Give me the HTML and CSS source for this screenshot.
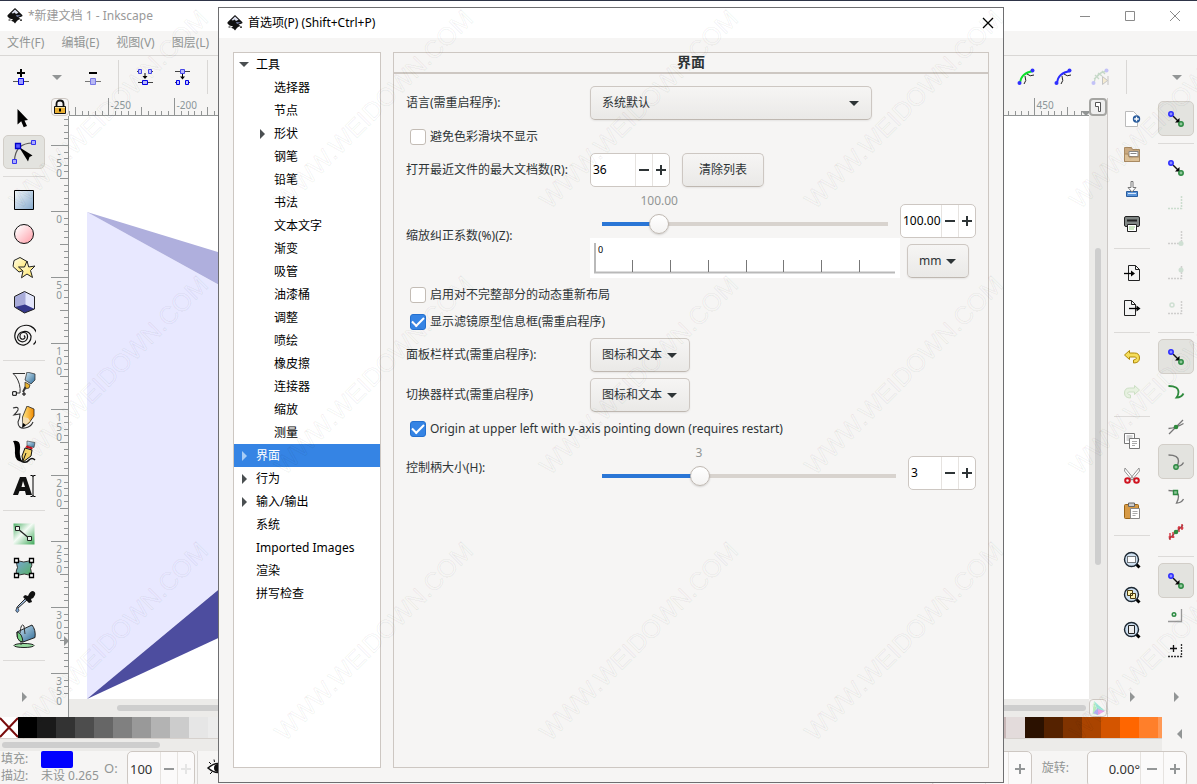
FILE: index.html
```html
<!DOCTYPE html>
<html lang="zh-CN">
<head>
<meta charset="utf-8">
<title>新建文档 1 - Inkscape</title>
<link rel="stylesheet" href="styles.css">
</head>
<body>
<svg class="defs" aria-hidden="true">
  <defs>
    <linearGradient id="gBlue" x1="0" y1="0" x2="1" y2="1"><stop offset="0" stop-color="#f4f8fb"/><stop offset="1" stop-color="#85a9cc"/></linearGradient>
    <linearGradient id="gPink" x1="0" y1="0" x2="1" y2="1"><stop offset=".1" stop-color="#fff"/><stop offset="1" stop-color="#ff9aa5"/></linearGradient>
    <linearGradient id="gYellow" x1="0" y1="0" x2="1" y2="1"><stop offset="0" stop-color="#fffef0"/><stop offset="1" stop-color="#ffe45c"/></linearGradient>
    <linearGradient id="gGreen" x1="0" y1="0" x2="1" y2="1"><stop offset="0" stop-color="#4fb068"/><stop offset=".45" stop-color="#f4fbf5"/><stop offset="1" stop-color="#3ea858"/></linearGradient>
    <linearGradient id="gMesh" x1="0" y1="0" x2="1" y2="1"><stop offset="0" stop-color="#7aa6d6"/><stop offset="1" stop-color="#55b060"/></linearGradient>
    <linearGradient id="gSteel" x1="0" y1="0" x2="1" y2="1"><stop offset="0" stop-color="#d5ecf8"/><stop offset="1" stop-color="#2e6a96"/></linearGradient>
    <linearGradient id="gOrange" x1="0" y1="0" x2="1" y2="0"><stop offset="0" stop-color="#ffe98a"/><stop offset="1" stop-color="#f08a00"/></linearGradient>
    <symbol id="logo" viewBox="0 0 16 16"><path d="M8 0 15.500 7.200Q16 8.500 13.500 9L11.500 9.500 13.500 11 11 12 9.500 13.500 8 15.500 6.500 13.800 4 12.800 6.200 11.500 2.500 10.500 0.500 8.500 0.500 7.200Z" fill="#111"/><path d="M8 1.500 4.500 5 6 5.500 7.500 4.500 9 6 11.500 4.800Z" fill="#dfe3f2"/><path d="M9 7 14 7.500 10 9Z" fill="#7c86ac"/><path d="M13 11.500h2v1.200h-2zM1.500 11.500h2v1h-2z" fill="#111"/></symbol>
    <symbol id="snap" viewBox="0 0 24 24"><path d="m9 9 6 6" stroke="#111" stroke-width="1.400"/><path d="M15.500 15.500h-4.500L15.500 11Z" fill="#000"/><circle cx="7" cy="7" r="2.200" fill="#8f8fff" stroke="#2b2bff" stroke-width="1.500"/><circle cx="17" cy="17" r="2.200" fill="#8fc79a" stroke="#2d8a42" stroke-width="1.500"/></symbol>
    <symbol id="lens" viewBox="0 0 24 24"><path d="m16 16 3.500 3.500" stroke="#000" stroke-width="3"/><circle cx="11.500" cy="11.500" r="7" fill="#cfe0f0" stroke="#1c2732" stroke-width="1.400"/></symbol>
  </defs>
</svg>

<div class="app">
  <header class="titlebar">
    <svg class="logo"><use href="#logo"/></svg>
    <span>*新建文档 1 - Inkscape</span>
    <div class="window-buttons">
      <button aria-label="最小化"><svg viewBox="0 0 12 12"><path d="M1 6.500h10"/></svg></button>
      <button aria-label="最大化"><svg viewBox="0 0 12 12"><path d="M1.500 1.500h9v9h-9z"/></svg></button>
      <button aria-label="关闭"><svg viewBox="0 0 12 12"><path d="m1 1 10 10M11 1 1 11"/></svg></button>
    </div>
  </header>

  <nav class="menubar">
    <button>文件(F)</button><button>编辑(E)</button><button>视图(V)</button><button>图层(L)</button>
  </nav>

  <div class="toolbar">
    <button class="tb" aria-label="插入节点"><svg viewBox="0 0 24 24"><path d="M4 16.500h16" stroke="#555"/><path d="M12 4v8M8 8h8" stroke="#000" stroke-width="2"/><path d="M9.500 13.500h5v6h-5z" fill="#9d9dff" stroke="#0000e6"/></svg></button>
    <button class="tb-caret" aria-label="更多插入选项"><span class="caret"></span></button>
    <button class="tb" aria-label="删除节点"><svg viewBox="0 0 24 24"><path d="M4 16.500h16" stroke="#777"/><path d="M8 8h8" stroke="#000" stroke-width="2"/><path d="M9.500 13.500h5v6h-5z" fill="#b8b8f4" stroke="#7a7ae6"/></svg></button>
    <span class="vsep"></span>
    <button class="tb" aria-label="连接节点"><svg viewBox="0 0 24 24"><path d="M5 17.500h15" stroke="#444"/><path d="M9.500 15.500h5v4h-5z" fill="#b8b8ff" stroke="#0000e6"/><path d="M5.500 4.500h3v4h-3zM15.500 4.500h3v4h-3z" fill="#c4c4ff" stroke="#4646e8"/><path d="M4 6.500h1M19 6.500h1" stroke="#444"/><path d="M12 8v4" stroke="#000"/><path d="M9.500 11h5L12 14Z"/></svg></button>
    <button class="tb" aria-label="分割节点"><svg viewBox="0 0 24 24"><path d="M5 6.500h15" stroke="#444"/><path d="M10.500 4.500h4v4h-4z" fill="#b8b8ff" stroke="#4646e8"/><path d="M6.500 15.500h3v4h-3zM15.500 15.500h3v4h-3z" fill="#c4c4ff" stroke="#0000e6"/><path d="M5 17.500h1M19 17.500h1" stroke="#444"/><path d="M12.500 9v3" stroke="#000"/><path d="M10 11.500h5L12.500 14.500Z"/></svg></button>
    <span class="vsep"></span>
    <div class="toolbar-end">
      <button class="tb" aria-label="蒙版路径"><svg viewBox="0 0 24 24"><path d="M5 18Q6 8 18 6" fill="none" stroke="#0be02a" stroke-width="1.800"/><path d="M10 11q2 5-1 8M12 9q3 3 7 1" fill="none" stroke="#222"/><circle cx="4.500" cy="18" r="2" fill="#3030ff"/><circle cx="17.500" cy="5.500" r="2" fill="#3030ff"/></svg></button>
      <button class="tb" aria-label="编辑剪裁路径"><svg viewBox="0 0 24 24"><path d="M5 18Q6 8 18 6" fill="none" stroke="#2a2aff" stroke-width="1.800"/><path d="M10 11q2 5-1 8M12 9q3 3 7 1" fill="none" stroke="#222"/><circle cx="4.500" cy="18" r="2" fill="#3030ff"/><circle cx="17.500" cy="5.500" r="2" fill="#3030ff"/></svg></button>
      <button class="tb faded" aria-label="路径效果参数" disabled><svg viewBox="0 0 24 24"><path d="M5 18Q6 8 18 6M5 14l5-4M9 8l4 3m0-5 3 3M6 10l4 4" fill="none" stroke="#5a9a65" stroke-width="1.300"/><circle cx="4.500" cy="18" r="2" fill="#5050ff"/><circle cx="17.500" cy="5.500" r="2" fill="#5050ff"/><path d="m13.500 11.500 5 4-5 4zM19 11v9" fill="#f5d680" stroke="#555"/></svg></button>
      <span class="vsep"></span>
      <button class="tb-caret far" aria-label="更多"><span class="caret"></span></button>
    </div>
  </div>

  <main class="workspace">
    <div class="toolbox">
      <button aria-label="选择器"><svg viewBox="0 0 24 24"><path d="M5.500 3v15.500l3.700-3.200 2.500 6 3.300-1.400-2.500-5.400 3.500-.5Z"/></svg></button>
      <button class="on" aria-label="节点"><svg viewBox="0 0 24 24"><path d="M2.500 21Q3 3 21 3" fill="none" stroke="#555" stroke-width="1.200"/><path d="m7 7 13.500 8.500-3 1.500-1.500 4.500Z" fill="#000"/><path d="M3.500 3.500h5v5h-5z" fill="#5a5aff" stroke="#0000c8" stroke-width="1.300"/><path d="M19.500.5h4v4h-4zM.5 19.500h4v4h-4z" fill="#aaf" stroke="#33e" /></svg></button>
      <hr>
      <button aria-label="矩形"><svg viewBox="0 0 24 24"><path d="M2.500 2.500h19v19h-19z" fill="url(#gBlue)" stroke="#000"/></svg></button>
      <button aria-label="椭圆"><svg viewBox="0 0 24 24"><circle cx="12" cy="12" r="9.500" fill="url(#gPink)" stroke="#111"/></svg></button>
      <button aria-label="星形"><svg viewBox="0 0 24 24"><path d="m8 1.500 7 4-1 8-7 2.500-6-5.500 1-6Z" fill="url(#gYellow)" stroke="#222"/><path d="m15 5 1.700 6 6.300-1-4.500 4.500 2 7-5.500-3.500-5.500 3.800L11 15 6.500 11h6Z" fill="url(#gYellow)" stroke="#222"/></svg></button>
      <button aria-label="3D 盒子"><svg viewBox="0 0 24 24"><path d="M2.500 6.500 12.500 1.500 22.500 6.500V19L12.500 23 2.500 17Z" fill="#a9acd9"/><path d="M13.500 1.500 22.500 6.500V19l-9-4Z" fill="#e3e6fb"/><path d="m3 17 10-2.500 9.500 4.500-10 4Z" fill="#35388b"/><path d="M2.500 6.500 12.500 1.500 22.500 6.500V19L12.500 23 2.500 17Z" fill="none" stroke="#222"/></svg></button>
      <button aria-label="螺旋"><svg viewBox="0 0 24 24"><path d="M12 11.500q2 2 0 3.300a2.600 2.600 0 0 1-4-2.300 3.700 3.700 0 0 1 7.500-.5 5 5 0 0 1-10 1.500 7 7 0 0 1 13.500-1.500 8 8.500 0 0 1-15.500 3.500A11 10.500 0 0 1 12 1.500a11 11 0 0 1 9.500 19" fill="none" stroke="#111" stroke-width="1.200"/></svg></button>
      <hr>
      <button aria-label="钢笔"><svg viewBox="0 0 24 24"><path d="M1 1.500h12M1 1.500l2.500 2.500Q9 12 8 21H3" fill="none" stroke="#333"/><path d="m15 0 8 2v6l-4 4-6-4Z" fill="url(#gSteel)" stroke="#222" stroke-width=".7"/><path d="m13 10 5 3-1 3-4 1Z" fill="#e8b12e" stroke="#222" stroke-width=".7"/><path d="m13.500 15-2.500 5" stroke="#333" stroke-width="2"/><path d="M.7 19.700h3.600v3.600H.7zM11 21h2v2h-2z" fill="#fff" stroke="#000"/></svg></button>
      <button aria-label="铅笔"><svg viewBox="0 0 24 24"><path d="M1 2q6-2 5 2-1 2-4 5l6-1Q8 12 6 16q0 7 7 6 6-1 8-6" fill="none" stroke="#333" stroke-width="1.100"/><path d="m15 0 7 3v7l-5 7-6 4-.500-10Z" fill="url(#gOrange)" stroke="#222" stroke-width=".8"/><path d="m11 11 5 1 2 3-7 6Z" fill="#f3ddb2"/><path d="m11 17-1 5 4-3Z"/></svg></button>
      <button aria-label="书法"><svg viewBox="0 0 24 24"><path d="M1 1q8-2 7 8-1 9 3 13Q2 22 3 11q0-7-2-10Z"/><path d="M9 21q5 3 8-1 3-3 6 0" fill="none" stroke="#111" stroke-width="1.500"/><path d="m15 1 8 1.500-1 5-7-2Z" fill="url(#gSteel)" stroke="#333" stroke-width=".6"/><path d="m14.500 5.500 6 2v2l-7-2Z" fill="#c40f1c"/><path d="m13 8 7 2-1 6-8 6-1-6Z" fill="#f5d469" stroke="#111"/><path d="m11 21 3-8" stroke="#111"/></svg></button>
      <button aria-label="文本"><svg viewBox="0 0 24 24"><path d="m1 21 7-18h6l6 18M13 21" fill="#111"/><path d="m9.500 13 1.500-6 2 6Z" fill="#f6f5f4"/><path d="m7.500 17h5.500l1 4h-8Z" fill="#f6f5f4"/><path d="M18.500 1.500h1.500q1 0 1 1 0-1 1-1h1.500M18.500 22.500h1.500q1 0 1-1 0 1 1 1h1.500M21 2v20" fill="none" stroke="#000"/></svg></button>
      <hr>
      <button aria-label="渐变"><svg viewBox="0 0 24 24"><path d="M1.500 1.500h21v21h-21z" fill="url(#gGreen)"/><path d="m6 7 12 10" stroke="#222" stroke-width="1.300"/><path d="M3.500 4.500h4v4h-4zM15.500 14.500h4v4h-4z" fill="#e8f3ea" stroke="#222"/></svg></button>
      <button aria-label="网格渐变"><svg viewBox="0 0 24 24"><path d="M4.500 4.500q7 3 15 0 1 6-1 8 1 3 1 7-7-3-15 0-1-5 1-8-1-3-1-7Z" fill="url(#gMesh)" stroke="#333"/><path d="M2.500 2.500h4v4h-4zM17.500 2.500h4v4h-4zM2.500 17.500h4v4h-4zM17.500 17.500h4v4h-4z" fill="#fff" stroke="#000" stroke-width="1.300"/></svg></button>
      <button aria-label="吸管"><svg viewBox="0 0 24 24"><path d="m15 7-9 9q-2 2-1 3l11-10Z" fill="#aac8ea" stroke="#222"/><path d="m13 5 3 1q2-5 5-5 3 1 2 4-1 3-4 4l1 3-3 1-6-6Z" fill="#111"/><path d="M5.500 17.500q3 3 0 5-3-1-1-4Z" fill="#7ba8dc" stroke="#333" stroke-width=".8"/></svg></button>
      <button aria-label="油漆桶"><svg viewBox="0 0 24 24"><ellipse cx="12" cy="21.500" rx="10" ry="2" fill="#98dba0" stroke="#222"/><path d="M5 8q-1 5 3 9l3 1 12-4.500Q24 6 20 1Z" fill="url(#gSteel)" stroke="#222"/><path d="M5 8q5 1 6 10-4 0-5.500-4Z" fill="#71cf80" stroke="#222"/><path d="M9 18v3M8 9Q9-2 12 2l1 8" fill="none" stroke="#333"/></svg></button>
      <hr>
      <button class="more" aria-label="更多工具"><span class="tri-right"></span></button>
    </div>

    <div class="canvas-frame">
      <button class="lock" aria-label="锁定参考线"><svg viewBox="0 0 18 18"><path d="M5.500 9V6q0-3.500 3.500-3.500T12.500 6v3" fill="none" stroke="#111" stroke-width="1.800"/><path d="M3.500 8.500h11v7h-11z" fill="#e9af32" stroke="#111"/><path d="M4 9.500h10" stroke="#fbe59c"/><path d="M8 10.500h2v3h-2z"/></svg></button>
      <svg class="ruler-h" id="rulerH" aria-hidden="true"></svg>
      <button class="page-btn" aria-label="缩放到页面"><svg viewBox="0 0 18 18"><path d="M6.500 4.500h5v9h-2v-5h-3z" fill="#fff" stroke="#555"/></svg></button>
      <svg class="ruler-v" id="rulerV" aria-hidden="true"></svg>
      <svg class="canvas" role="img" aria-label="画布">
        <path d="M18 96 369 290 18 583Z" fill="#e8e8ff"/>
        <path d="M18 96 440 225V329Z" fill="#afafdd"/>
        <path d="M18 583 440 232V387Z" fill="#4d4d9f"/>
      </svg>
      <div class="scroll-v"><span></span></div>
      <div class="scroll-h"><span></span></div>
      <button class="cms-btn" aria-label="色彩管理"><svg viewBox="0 0 18 18"><path d="M5 2 3.500 15 9 16Z" fill="#b9f0c0"/><path d="M5 2 16 12 9 13Z" fill="#9fe9d8"/><path d="m16 12-7 4-.500-6Z" fill="#e8a5e8"/><path d="m4 14 5 2V9Z" fill="#b5b0f5"/></svg></button>
    </div>

    <div class="dock commands">
      <button aria-label="新建"><svg viewBox="0 0 24 24"><path d="M5.500 4.500h8l4 4v11h-12z" fill="#fff" stroke="#bbb"/><circle cx="16.500" cy="12" r="3.700" fill="#2a5c9c"/><path d="M16.500 9.700v4.600M14.200 12h4.600" stroke="#fff" stroke-width="1.300"/></svg></button>
      <button aria-label="打开"><svg viewBox="0 0 24 24"><path d="M4.500 5.500h7l1 2h7v12h-15z" fill="#c9a980" stroke="#a98a62"/><path d="M9 9.500h9v5H9z" fill="#fff" stroke="#888"/><path d="M10.500 11.500h6" stroke="#888"/><path d="M4.500 12h3.500l1 3h10.500v4.500h-15z" fill="#dcc096" stroke="#a98a62"/></svg></button>
      <button aria-label="保存"><svg viewBox="0 0 24 24"><path d="M6.500 14.500h11v5h-11z" fill="#5b95da" stroke="#2a5c9c"/><path d="M8 16.500h8" stroke="#dce9f8"/><path d="M11 4.500h2v6h3L12 15l-4-4.500h3z" fill="#fff" stroke="#777"/></svg></button>
      <button aria-label="打印"><svg viewBox="0 0 24 24"><rect x="4.500" y="4.500" width="15" height="10" rx="1.500" fill="#7f8583" stroke="#222"/><path d="M7 7.500h10v2H7z" fill="#222"/><path d="M7.500 12.500h9v7h-9z" fill="#fff" stroke="#222"/><path d="M9 15h6M9 17h5" stroke="#9ccf8a"/></svg></button>
      <hr>
      <button aria-label="导入"><svg viewBox="0 0 24 24"><path d="M8.500 4.500h7l4 4v11h-11z" fill="#f4f4f4" stroke="#222"/><path d="M15.500 4.500v4h4" fill="none" stroke="#222"/><path d="M4 12.500h8" stroke="#000" stroke-width="1.300"/><path d="m11 9.500 4 3-4 3Z"/></svg></button>
      <button aria-label="导出"><svg viewBox="0 0 24 24"><path d="M4.500 4.500h7l4 4v11h-11z" fill="#f4f4f4" stroke="#222"/><path d="M11.500 4.500v4h4" fill="none" stroke="#222"/><path d="M9 12.500h9" stroke="#000" stroke-width="1.300"/><path d="m16.500 9.500 4 3-4 3Z"/></svg></button>
      <hr>
      <button aria-label="撤销"><svg viewBox="0 0 24 24"><path d="M9.500 5.500 4.500 10 9.500 14.500V12h6q2.500 2-2 3v3q6 0 6-5t-5-5H9.500Z" fill="#f5dd5a" stroke="#b08a0a"/></svg></button>
      <button class="faded" aria-label="重做" disabled><svg viewBox="0 0 24 24"><path d="m14.500 5.500 5 4.500-5 4.500V12h-6q-2.500 2 2 3v3q-6 0-6-5t5-5h5Z" fill="#c5e8b5" stroke="#6fae58"/></svg></button>
      <hr>
      <button aria-label="复制"><svg viewBox="0 0 24 24"><path d="M4.500 4.500h10v10h-10z" fill="#fff" stroke="#777"/><path d="M6.500 7h6M6.500 9h6M6.500 11h3" stroke="#aaa"/><path d="M9.500 9.500h10v10h-10z" fill="#fff" stroke="#777"/><path d="M12 12.500h5M12 14.500h5M12 16.500h3" stroke="#aaa"/></svg></button>
      <button aria-label="剪切"><svg viewBox="0 0 24 24"><path d="m5 4 9 11-2 1L4.500 7ZM19 4l-9 11 2 1 7.500-9Z" fill="#fff" stroke="#888" stroke-width=".9"/><circle cx="7.500" cy="16.500" r="2.300" fill="none" stroke="#cf1420" stroke-width="2"/><circle cx="16.500" cy="16.500" r="2.300" fill="none" stroke="#cf1420" stroke-width="2"/></svg></button>
      <button aria-label="粘贴"><svg viewBox="0 0 24 24"><rect x="4.500" y="5.500" width="14" height="14" rx="1" fill="#d79a45" stroke="#9a6416"/><path d="M8.500 4h6v3.500h-6z" fill="#ccc" stroke="#666"/><path d="M10.500 9.500h9v10h-9z" fill="#fff" stroke="#888"/><path d="M12.500 12.500h5M12.500 14.500h5M12.500 16.500h3" stroke="#aaa"/></svg></button>
      <hr>
      <button aria-label="缩放选区"><svg viewBox="0 0 24 24"><use href="#lens"/><path d="M7.500 8.500h8v6h-8z" fill="#fff" stroke="#000" stroke-dasharray="1 1"/></svg></button>
      <button aria-label="缩放绘图"><svg viewBox="0 0 24 24"><use href="#lens"/><path d="M7.500 7.500h5v5h-5zM10.500 10.500h5v5h-5z" fill="#fff3b0" stroke="#4a3a10"/></svg></button>
      <button aria-label="缩放页面"><svg viewBox="0 0 24 24"><use href="#lens"/><path d="M8.500 7.500h6v8h-6z" fill="#eee" stroke="#222"/></svg></button>
      <button class="more" aria-label="更多命令"><span class="tri-right"></span></button>
    </div>

    <div class="dock snaps">
      <button class="on" aria-label="启用吸附"><svg><use href="#snap"/></svg></button>
      <hr>
      <button aria-label="吸附边界框"><svg><use href="#snap"/></svg></button>
      <button class="faded" aria-label="吸附边界框边" disabled><svg viewBox="0 0 24 24"><path d="M4 17.500h13.500V5" fill="none" stroke="#6aa878" stroke-width="1.500" stroke-dasharray="2 1"/></svg></button>
      <button class="faded" aria-label="吸附边界框角" disabled><svg viewBox="0 0 24 24"><path d="M4 17.500h13.500V5" fill="none" stroke="#777" stroke-width="1.500" stroke-dasharray="2 1"/><circle cx="17" cy="17.500" r="2.500" fill="#78b088"/></svg></button>
      <button class="faded" aria-label="吸附边中点" disabled><svg viewBox="0 0 24 24"><path d="M4 17.500h13.500V5" fill="none" stroke="#777" stroke-width="1.500" stroke-dasharray="2 1"/><circle cx="17" cy="9" r="2.500" fill="#78b088"/></svg></button>
      <button class="faded" aria-label="吸附框中心" disabled><svg viewBox="0 0 24 24"><path d="M4 17.500h13.500V5" fill="none" stroke="#777" stroke-width="1.500" stroke-dasharray="2 1"/><circle cx="8" cy="9" r="2" fill="none" stroke="#78b088" stroke-width="1.500"/></svg></button>
      <hr>
      <button class="on" aria-label="吸附节点"><svg><use href="#snap"/></svg></button>
      <button aria-label="吸附路径"><svg viewBox="0 0 24 24"><path d="M4.500 6q10 0 10 6 0 3-2 5.500 5 0 7-4" fill="none" stroke="#2f8a3d" stroke-width="1.800"/></svg></button>
      <button aria-label="吸附交点"><svg viewBox="0 0 24 24"><path d="m5 19 14-14M4.500 13.500Q12 13 19.500 8.500" fill="none" stroke="#777" stroke-width="1.300"/><circle cx="12" cy="12" r="2.300" fill="#2f8a3d"/></svg></button>
      <button class="on" aria-label="吸附尖锐节点"><svg viewBox="0 0 24 24"><path d="M4.500 5q10 0 10 6 0 3-2 5.500 5 0 7-4" fill="none" stroke="#777" stroke-width="1.400"/><circle cx="12" cy="17" r="2.200" fill="#8fc79a" stroke="#2d8a42" stroke-width="1.400"/></svg></button>
      <button aria-label="吸附平滑节点"><svg viewBox="0 0 24 24"><path d="M4.500 5.500q10 0 10 6 0 3-2 6.500 5 0 7-4" fill="none" stroke="#777" stroke-width="1.300"/><path d="M9.500 5.500h4v4h-4z" fill="#8fc79a" stroke="#2d8a42" stroke-width="1.400"/></svg></button>
      <button aria-label="吸附中点"><svg viewBox="0 0 24 24"><path d="m5 19 14-14" stroke="#777" stroke-width="1.300"/><path d="M6 13v7M9 12v6M4.500 17h6M15 6v6M18 4v6M13.500 8h6" stroke="#cf1420" stroke-width="1.200"/><circle cx="12" cy="12" r="2.300" fill="#2f8a3d"/></svg></button>
      <hr>
      <button class="on" aria-label="吸附其它"><svg><use href="#snap"/></svg></button>
      <button aria-label="吸附对象中心"><svg viewBox="0 0 24 24"><path d="M4 17.500h13.500V5" fill="none" stroke="#999" stroke-width="1.300"/><circle cx="10" cy="10.500" r="1.800" fill="#d8ecdc" stroke="#2d8a42" stroke-width="1.400"/></svg></button>
      <button aria-label="吸附旋转中心"><svg viewBox="0 0 24 24"><path d="M4 17.500h13.500V5" fill="none" stroke="#333" stroke-width="1.300" stroke-dasharray="2 1"/><path d="M9.500 6v7M6 9.500h7" stroke="#111" stroke-width="1.300"/></svg></button>
      <button class="more" aria-label="更多吸附选项"><span class="tri-right"></span></button>
    </div>
  </main>

  <div class="palette-bar">
    <div class="palette-main">
      <div class="palette" id="palette"></div>
      <div class="palette-scroll"><span></span></div>
    </div>
    <button class="palette-menu" aria-label="调色板菜单"><span class="tri-left"></span></button>
  </div>

  <footer class="statusbar">
    <div class="style-grid">
      <span>填充:</span><button class="fill-swatch" aria-label="填充颜色"></button>
      <span>描边:</span><span class="stroke-val">未设 0.265</span>
    </div>
    <label class="opacity-label" for="opacity">O:</label>
    <div class="spin dim spin-opacity"><input id="opacity" type="text" value="100"><button class="minus" aria-label="减少"></button><button class="plus pale" aria-label="增加"></button></div>
    <span class="vsep"></span>
    <button class="eye" aria-label="图层可见性"><svg viewBox="0 0 24 24"><path d="M2 12q10-9 20 0-10 9-20 0Z" fill="#fff" stroke="#111" stroke-width="1.500"/><circle cx="12" cy="12" r="4" fill="#111"/><path d="M5 8 3 6M8.500 6 8 3.500M13 5.500V3M17 7l1.500-2.500M6 16l-2 2" stroke="#111"/></svg></button>
    <div class="status-end">
      <div class="spin dim spin-zoom"><input type="text" aria-label="缩放" value="49%"><button class="minus" aria-label="缩小"></button><button class="plus" aria-label="放大"></button></div>
      <label for="rotate">旋转:</label>
      <div class="spin dim spin-rotate"><input id="rotate" type="text" value="0.00°"><button class="minus" aria-label="减少"></button><button class="plus" aria-label="增加"></button></div>
    </div>
  </footer>
</div>

<section class="dialog" role="dialog" aria-labelledby="dlgTitle">
  <header class="dialog-title">
    <svg class="logo"><use href="#logo"/></svg>
    <h1 id="dlgTitle">首选项(P) (Shift+Ctrl+P)</h1>
    <button aria-label="关闭"><svg viewBox="0 0 12 12"><path d="m1 1 10 10M11 1 1 11"/></svg></button>
  </header>
  <div class="dialog-body">
    <ul class="tree" role="tree">
      <li class="open">工具
      <li class="child">选择器
      <li class="child">节点
      <li class="child closed">形状
      <li class="child">钢笔
      <li class="child">铅笔
      <li class="child">书法
      <li class="child">文本文字
      <li class="child">渐变
      <li class="child">吸管
      <li class="child">油漆桶
      <li class="child">调整
      <li class="child">喷绘
      <li class="child">橡皮擦
      <li class="child">连接器
      <li class="child">缩放
      <li class="child">测量
      <li class="closed selected">界面
      <li class="closed">行为
      <li class="closed">输入/输出
      <li>系统
      <li>Imported Images
      <li>渲染
      <li>拼写检查
    </ul>
    <div class="panel">
      <h2>界面</h2>
      <form class="form">
        <div class="row">
          <label for="lang">语言(需重启程序):</label>
          <span class="combo combo-wide"><select id="lang"><option>系统默认</option></select></span>
        </div>
        <label class="check"><input type="checkbox">避免色彩滑块不显示</label>
        <div class="row">
          <label for="recent">打开最近文件的最大文档数(R):</label>
          <div class="spin spin-recent"><input id="recent" type="text" value="36"><button type="button" class="minus" aria-label="减少"></button><button type="button" class="plus" aria-label="增加"></button></div>
          <button type="button" class="btn">清除列表</button>
        </div>
        <div class="row">
          <label for="zoomCorr">缩放纠正系数(%)(Z):</label>
          <div class="zoom-grid">
            <div class="slider">
              <output for="zoomCorr" style="width:40%">100.00</output>
              <input id="zoomCorr" type="range" min="30" max="425" value="100" style="--fill:20%">
            </div>
            <div class="spin"><input type="text" aria-label="缩放纠正值" value="100.00"><button type="button" class="minus" aria-label="减少"></button><button type="button" class="plus" aria-label="增加"></button></div>
            <svg class="zoom-ruler" viewBox="0 0 310 40"><path d="M5 5v30M4 34.500h301" stroke="#b9b9b9" stroke-width="2"/><path d="M42.500 22v12M80.500 22v12M118.500 22v12M156.500 22v12M193.500 22v12M231.500 22v12M269.500 22v12" stroke="#777"/><text x="8" y="15">0</text></svg>
            <span class="combo combo-unit"><select aria-label="单位"><option>mm</option></select></span>
          </div>
        </div>
        <label class="check"><input type="checkbox">启用对不完整部分的动态重新布局</label>
        <label class="check"><input type="checkbox" checked>显示滤镜原型信息框(需重启程序)</label>
        <div class="row">
          <label for="dockStyle">面板栏样式(需重启程序):</label>
          <span class="combo"><select id="dockStyle"><option>图标和文本</option></select></span>
        </div>
        <div class="row">
          <label for="switchStyle">切换器样式(需重启程序)</label>
          <span class="combo"><select id="switchStyle"><option>图标和文本</option></select></span>
        </div>
        <label class="check"><input type="checkbox" checked>Origin at upper left with y-axis pointing down (requires restart)</label>
        <div class="row">
          <label for="handle">控制柄大小(H):</label>
          <div class="handle-grid">
            <div class="slider">
              <output for="handle" style="width:66%">3</output>
              <input id="handle" type="range" min="1" max="7.2" step="any" value="3" style="--fill:33%">
            </div>
            <div class="spin"><input type="text" aria-label="控制柄大小值" value="3"><button type="button" class="minus" aria-label="减少"></button><button type="button" class="plus" aria-label="增加"></button></div>
          </div>
        </div>
      </form>
    </div>
  </div>
</section>

<svg class="watermark" id="watermark" aria-hidden="true"></svg>
<script src="app.js"></script>
</body>
</html>
```

FILE: styles.css
```css
* { box-sizing: border-box; }
html, body { height: 100%; margin: 0; }
body {
  position: relative;
  overflow: hidden;
  background: #f6f5f4;
  color: #2e3436;
  font: 12px/16px "Noto Sans", "Noto Sans CJK SC", sans-serif;
}
button, input, select { font: inherit; color: inherit; margin: 0; }
button { display: flex; align-items: center; justify-content: center; padding: 0; border: 0; background: none; }
hr { width: 100%; height: 1px; margin: 7px 0 6px; border: 0; background: #dcdad8; }
svg { display: block; }
.defs { position: absolute; width: 0; height: 0; }
.logo { width: 16px; height: 16px; }
.faded { opacity: .3; }
.vsep { width: 1px; height: 34px; background: #d9d7d5; }

.caret { border: 5px solid transparent; border-top-color: #929595; border-bottom: 0; }
.tri-right { border: 5px solid transparent; border-left-color: #929595; border-right: 0; }
.tri-left { border: 5px solid transparent; border-right-color: #929595; border-left: 0; }

/* main window */
.app { display: flex; flex-direction: column; height: 100%; color: #929595; }

.titlebar {
  display: flex; align-items: center; gap: 5px; flex: none;
  height: 31px; padding-left: 7px;
  border-top: 1px solid #2e3447; background: #fff; color: #999;
}
.window-buttons { display: flex; margin-left: auto; }
.window-buttons button { width: 45px; height: 30px; }
.window-buttons svg, .dialog-title button svg { width: 12px; height: 12px; fill: none; stroke: #8a8a8a; }

.menubar { display: flex; flex: none; gap: 17px; height: 25px; padding-left: 7px; border-bottom: 1px solid #d9d7d5; }

.toolbar { display: flex; align-items: center; flex: none; height: 42px; padding-left: 2px; }
.toolbar-end { display: flex; align-items: center; margin-left: auto; }
.tb { width: 37px; height: 34px; }
.tb svg { width: 24px; height: 24px; }
.tb-caret { width: 35px; height: 34px; }
.tb-caret.far { width: 20px; margin-left: 33px; margin-right: 10px; }
.toolbar .vsep { margin: 0 7px; }

.workspace { display: flex; flex: 1; min-height: 0; }

.toolbox { display: flex; flex-direction: column; flex: none; width: 51px; padding: 3px 6px 0 3px; }
.toolbox button { flex: none; height: 34px; border: 1px solid transparent; border-radius: 5px; }
.toolbox svg, .dock svg { width: 24px; height: 24px; }
.toolbox .on, .dock .on { background: #e3e3df; border-color: #d2cec8; }
.toolbox .more, .dock .more { height: 20px; margin-top: auto; margin-bottom: 10px; }

.canvas-frame {
  display: grid; flex: 1; min-width: 0;
  grid-template-columns: 18px 1fr 18px;
  grid-template-rows: 18px 1fr 18px;
  grid-template-areas: "lock top page" "left canvas right" "left bottom cms";
}
.lock { grid-area: lock; }
.page-btn { grid-area: page; }
.cms-btn { grid-area: cms; }
.lock, .page-btn, .cms-btn { border: 1px solid #cdc7c2; border-radius: 4px; }
.page-btn { border: 2px solid #a5a5a2; background: #eee; }
.lock svg, .page-btn svg, .cms-btn svg { flex: none; width: 18px; height: 18px; }
.ruler-h { grid-area: top; width: 100%; height: 18px; border-bottom: 1px solid #929595; }
.ruler-v { grid-area: left; width: 18px; height: 100%; border-right: 1px solid #929595; }
.ruler-h path, .ruler-v path { stroke: #929595; }
.ruler-h text, .ruler-v text { font-size: 10px; fill: #8b9699; }
.ruler-v text { text-anchor: middle; }
.ruler-h .mark, .ruler-v .mark { fill: #929595; stroke: none; }
.canvas { grid-area: canvas; width: 100%; height: 100%; background: #fff; overflow: hidden; }
.scroll-v, .scroll-h { display: flex; background: #ecebe9; }
.scroll-v { grid-area: right; flex-direction: column; padding: 132px 6px 134px; }
.scroll-h { grid-area: bottom; padding: 6px 3px 6px 48px; }
.scroll-v span, .scroll-h span { flex: 1; border-radius: 3px; background: #cecece; }

.dock { display: flex; flex-direction: column; flex: none; padding-top: 3px; }
.dock button { flex: none; width: 36px; height: 35px; border: 1px solid transparent; border-radius: 5px; }
.commands { width: 51px; padding-left: 6px; padding-right: 8px; border-left: 1px solid #cdc9c6; }
.snaps { width: 39px; padding-right: 3px; }

.palette-bar { display: flex; flex: none; height: 34px; }
.palette-main { flex: 1; min-width: 0; background: #ecebe9; }
.palette { display: flex; height: 22px; overflow: hidden; border-bottom: 1px solid #d6d1cd; }
.swatch { flex: none; width: 19px; height: 21px; }
.swatch.none { width: 18px; background: #fff; }
.swatch.none svg { width: 18px; height: 21px; stroke: #7a0c0c; stroke-width: 2; }
.palette-scroll { height: 12px; padding: 3px 2px; }
.palette-scroll span { display: block; width: 158px; height: 6px; border-radius: 3px; background: #cecece; }
.palette-menu { width: 35px; }

.statusbar { display: flex; align-items: center; flex: none; height: 33px; overflow: hidden; }
.style-grid { display: grid; grid-template-columns: 40px 63px; grid-template-rows: 17px 16px; flex: none; padding-left: 1px; }
.fill-swatch { width: 32px; height: 17px; border-radius: 2px; background: #00f; }
.stroke-val { white-space: nowrap; }
.opacity-label { width: 23px; font-size: 13px; }
.statusbar .vsep { margin-left: 2px; }
.statusbar .spin { height: 36px; align-self: flex-start; background: #fbfafa; }
.eye { margin-left: 8px; }
.eye svg { width: 24px; height: 24px; }
.status-end { display: flex; align-items: center; align-self: flex-start; height: 33px; margin-left: auto; padding-right: 10px; }
.status-end label { margin: 0 18px 0 10px; }
.spin-opacity { width: 68px; }
.spin-zoom { width: 100px; }
.spin-rotate { width: 100px; }
.spin-rotate input { text-align: right; padding-right: 8px; }
.dim.spin-rotate button, .dim.spin-zoom button { flex-basis: 23px; }

/* shared controls */
.spin { display: flex; height: 34px; overflow: hidden; border: 1px solid #cdc7c2; border-radius: 5px; background: #fff; }
.spin input { flex: 1; min-width: 0; width: 0; padding: 0 0 0 2px; border: 0; outline: 0; background: none; color: #000; }
.spin button { flex: 0 0 17px; border-left: 1px solid #e6e3e0; }
.minus::before, .plus::before {
  content: ""; width: 10px; height: 10px;
  background: linear-gradient(#2e3436, #2e3436) center / 10px 2px no-repeat;
}
.plus::before {
  background: linear-gradient(#2e3436, #2e3436) center / 10px 2px no-repeat,
              linear-gradient(#2e3436, #2e3436) center / 2px 10px no-repeat;
}
.dim button::before { opacity: .5; }
.dim .pale::before { opacity: .1; }
.dim input { color: #333; font-size: 13px; }
.spin-opacity input { padding-left: 2px; }

.combo { display: flex; align-items: center; position: relative; width: 100px; height: 34px; }
.combo select, .btn {
  width: 100%; height: 34px; padding: 0 12px;
  border: 1px solid #cdc7c2; border-bottom-color: #bfb8b1; border-radius: 5px;
  background: linear-gradient(#f6f5f4, #eae9e7);
  box-shadow: 0 1px 2px rgba(0, 0, 0, .07);
}
.combo select { appearance: none; padding: 0 11px; }
.combo::after {
  content: ""; position: absolute; right: 13px;
  border: 5px solid transparent; border-top-color: #2e3436; border-bottom: 0;
  pointer-events: none;
}
.combo-wide { width: 282px; }
.combo-unit { width: 62px; }
.btn { width: 82px; margin-left: 12px; }

/* preferences dialog */
.dialog {
  position: absolute; inset: 7px 193px 1px 218px;
  display: flex; flex-direction: column;
  border: 1px solid #6e6e70; background: #f6f5f4;
}
.dialog-title { display: flex; align-items: center; flex: none; height: 30px; padding: 0 9px 0 8px; background: #fff; color: #000; }
.dialog-title h1 { margin: 0 auto 0 5px; font-size: 12px; font-weight: 400; }
.dialog-title button svg { stroke: #000; stroke-width: 1.3; }
.dialog-body { display: flex; flex: 1; gap: 12px; min-height: 0; padding: 14px; }

.tree { flex: none; width: 148px; margin: 0; padding: 0; list-style: none; border: 1px solid #cdc7c2; background: #fff; color: #000; }
.tree li { display: flex; align-items: center; height: 23px; padding-left: 22px; }
.tree .child { padding-left: 40px; }
.tree .open::before, .tree .closed::before { content: ""; flex: none; }
.tree .open::before { margin: 0 7px 0 -17px; border: 5px solid transparent; border-top-color: #4a4f51; border-bottom: 0; }
.tree .closed::before { margin: 0 9px 0 -14px; border: 5px solid transparent; border-left-color: #4a4f51; border-right: 0; }
.tree .selected { background: #3584e4; color: #fff; }
.tree .selected::before { border-left-color: #a9cdf6; }

.panel { flex: 1; min-width: 0; border: 1px solid #cdc7c2; }
.panel h2 { margin: 0; padding-bottom: 1px; border-bottom: 2px solid #cdc7c2; font-size: 14px; line-height: 18px; font-weight: 700; text-align: center; }
.form { display: flex; flex-direction: column; gap: 6px; padding: 12px; }
.row { display: flex; align-items: center; }
.row > label { flex: 0 0 184px; white-space: nowrap; }
.check { display: flex; align-items: center; gap: 4px; height: 21px; padding-left: 4px; white-space: nowrap; }
.check input {
  appearance: none; display: grid; place-items: center;
  width: 16px; height: 16px; border: 1px solid #c3bcb5; border-radius: 3px; background: #fff;
}
.check input:checked { border-color: #2470cf; background: #3584e4; }
.check input:checked::before {
  content: ""; width: 10px; height: 5px; margin-bottom: 3px;
  border: solid #fff; border-width: 0 0 2px 2px; transform: rotate(-45deg);
}
.spin-recent { width: 80px; }

.zoom-grid { display: grid; flex: 1; grid-template-columns: 1fr 76px; align-items: end; }
.zoom-grid .combo { justify-self: center; }
.handle-grid { display: grid; flex: 1; grid-template-columns: 1fr 68px; align-items: end; }
.slider { display: flex; flex-direction: column; height: 45px; padding: 0 12px; }
.slider output { color: #929595; line-height: 16px; text-align: center; }
.slider input {
  appearance: none; width: 100%; height: 20px; margin: 5px 0 0; outline: 0;
  background: linear-gradient(90deg, #2a76d6 var(--fill), #d8d3ce var(--fill)) center / 100% 4px no-repeat;
}
.slider input::-webkit-slider-thumb {
  appearance: none; width: 20px; height: 20px;
  border: 1px solid #bfb8b1; border-radius: 50%;
  background: linear-gradient(#fff, #f4f3f2); box-shadow: 0 1px 2px rgba(0, 0, 0, .15);
}
.zoom-ruler { width: 100%; height: 40px; background: #fff; }
.zoom-ruler path { fill: none; }
.zoom-ruler text { font-size: 9px; fill: #000; }

.watermark { position: absolute; inset: 0; width: 100%; height: 100%; pointer-events: none; }
.watermark text {
  font: 25px "Liberation Sans", sans-serif;
  fill: none; stroke: #000; stroke-opacity: .06;
}
```

FILE: app.js
```js
const NS = "http://www.w3.org/2000/svg";

function add(parent, tag, attrs, text) {
  const el = document.createElementNS(NS, tag);
  for (const key in attrs) el.setAttribute(key, attrs[key]);
  if (text !== undefined) el.textContent = text;
  parent.appendChild(el);
  return el;
}

const STEP = 66.15;

// Horizontal ruler: the zero point lies 370 px right of the canvas edge.
const rulerH = document.getElementById("rulerH");
const zeroX = 370;
let d = "";
for (let i = -56; i * STEP / 10 + zeroX < 1017; i++) {
  const x = Math.round(zeroX + i * STEP / 10) + 0.5;
  const len = i % 10 === 0 ? 18 : i % 5 === 0 ? 9 : 5;
  d += `M${x} 18v-${len}`;
  if (i % 10 === 0) add(rulerH, "text", { x: x + 2, y: 11 }, i * 5);
}
add(rulerH, "path", { d });
add(rulerH, "path", { d: "M1012 13h10l-5 5Z", class: "mark" });

// Vertical ruler: digits are stacked one under another.
const rulerV = document.getElementById("rulerV");
const zeroY = 95;
d = "";
for (let i = -14; i * 6.6 + zeroY < 583; i++) {
  const y = Math.round(zeroY + i * 6.6) + 0.5;
  const len = i % 10 === 0 ? 18 : i % 5 === 0 ? 9 : 5;
  d += `M18 ${y}h-${len}`;
  if (i % 10 === 0) {
    [...String(i * 5)].forEach((c, n) => {
      if (y + 11 + n * 10 < 592) add(rulerV, "text", { x: 8, y: y + 11 + n * 10 }, c);
    });
  }
}
add(rulerV, "path", { d });
add(rulerV, "path", { d: "M13 520v10l5-5Z", class: "mark" });

const colors = ("000000 1a1a1a 333333 4d4d4d 666666 808080 999999 b3b3b3 cccccc e6e6e6 ececec f2f2f2 f9f9f9 ffffff " +
  "800000 ff0000 808000 ffff00 008000 00ff00 008080 00ffff 000080 0000ff 800080 ff00ff " +
  "2b0000 550000 800000 aa0000 d40000 ff0000 ff2a2a ff5555 ff8080 ffaaaa ffd5d5 " +
  "280b0b 501616 782121 a02c2c c83737 d35f5f de8787 e9afaf f4d7d7 " +
  "241c1c 483737 6c5353 916f6f ac9393 c8b7b7 e3dbdb " +
  "2b1100 552200 803300 aa4400 d45500 ff6600 ff7f2a ff9955").split(" ");
const palette = document.getElementById("palette");
palette.innerHTML = '<button class="swatch none" aria-label="无"><svg viewBox="0 0 18 21"><path d="M0 1 18 20M18 1 0 20"/></svg></button>' +
  colors.map(c => `<button class="swatch" aria-label="#${c}" style="background:#${c}"></button>`).join("");

const mark = document.getElementById("watermark");
for (let row = 0; row < 3; row++) {
  for (let col = 0; col < 5; col++) {
    const x = 20 + col * 265, y = 210 + row * 266;
    add(mark, "text", { x, y, transform: `rotate(-45 ${x} ${y})` }, "WWW.WEIDOWN.COM");
  }
}
```
